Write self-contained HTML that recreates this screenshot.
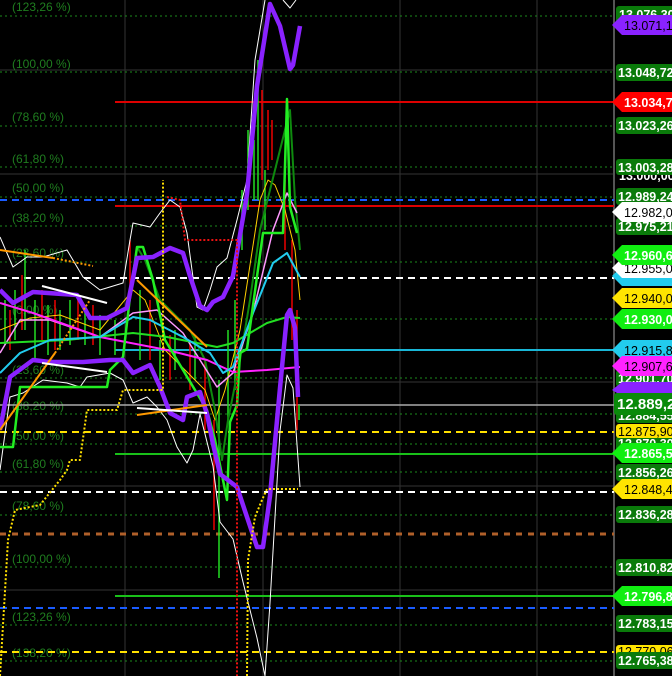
<!DOCTYPE html>
<html><head><meta charset="utf-8"><style>
html,body{margin:0;padding:0;background:#000;width:672px;height:676px;overflow:hidden}
svg{display:block}
text{font-family:"Liberation Sans",sans-serif}
.p{fill:#1f7d1f;font-size:12px}
.g{fill:#fff;font-size:12.5px;font-weight:bold}
.d{fill:#000;font-size:12.5px}
</style></head><body>
<svg width="672" height="676" viewBox="0 0 672 676">
<rect width="672" height="676" fill="#000"/>
<g stroke="#333" stroke-width="1">
<line x1="125" y1="0" x2="125" y2="676"/><line x1="263" y1="0" x2="263" y2="676"/><line x1="400" y1="0" x2="400" y2="676"/><line x1="537" y1="0" x2="537" y2="676"/>
<line x1="0" y1="70" x2="614" y2="70"/><line x1="0" y1="174" x2="614" y2="174"/><line x1="0" y1="382" x2="614" y2="382"/><line x1="0" y1="486" x2="614" y2="486"/><line x1="0" y1="590" x2="614" y2="590"/>
</g>
<line x1="614" y1="0" x2="614" y2="676" stroke="#555" stroke-width="2"/>
<g stroke="#1c8a1c" stroke-width="1" stroke-dasharray="2,3">
<line x1="0" y1="16" x2="614" y2="16"/><line x1="0" y1="72" x2="614" y2="72"/><line x1="0" y1="126" x2="614" y2="126"/><line x1="0" y1="167" x2="614" y2="167"/><line x1="0" y1="197" x2="614" y2="197"/><line x1="0" y1="226" x2="614" y2="226"/><line x1="0" y1="262" x2="614" y2="262"/><line x1="0" y1="319" x2="614" y2="319"/><line x1="0" y1="378" x2="614" y2="378"/><line x1="0" y1="414" x2="614" y2="414"/><line x1="0" y1="444" x2="614" y2="444"/><line x1="0" y1="472" x2="614" y2="472"/><line x1="0" y1="515" x2="614" y2="515"/><line x1="0" y1="567" x2="614" y2="567"/><line x1="0" y1="625" x2="614" y2="625"/><line x1="0" y1="661" x2="614" y2="661"/>
</g>
<g class="p">
<text x="12" y="11">(123,26 %)</text><text x="12" y="68">(100,00 %)</text><text x="12" y="121">(78,60 %)</text><text x="12" y="163">(61,80 %)</text><text x="12" y="192">(50,00 %)</text><text x="12" y="222">(38,20 %)</text><text x="12" y="257">(23,60 %)</text><text x="12" y="314">(0,00 %)</text><text x="12" y="374">(23,60 %)</text><text x="12" y="410">(38,20 %)</text><text x="12" y="440">(50,00 %)</text><text x="12" y="468">(61,80 %)</text><text x="12" y="510">(78,60 %)</text><text x="12" y="563">(100,00 %)</text><text x="12" y="621">(123,26 %)</text><text x="12" y="657">(138,20 %)</text>
</g>
<line x1="115" y1="102" x2="614" y2="102" stroke="#d00" stroke-width="2"/>
<line x1="0" y1="200" x2="614" y2="200" stroke="#1a5cff" stroke-width="2" stroke-dasharray="7,5"/>
<line x1="115" y1="206" x2="614" y2="206" stroke="#d00" stroke-width="2"/>
<line x1="0" y1="278" x2="614" y2="278" stroke="#fff" stroke-width="2" stroke-dasharray="7,5"/>
<line x1="115" y1="350" x2="614" y2="350" stroke="#19b6d6" stroke-width="2"/>
<line x1="0" y1="405" x2="614" y2="405" stroke="#aaa" stroke-width="1.5"/>
<line x1="0" y1="432" x2="614" y2="432" stroke="#ffe000" stroke-width="2" stroke-dasharray="7,5"/>
<line x1="115" y1="454" x2="614" y2="454" stroke="#19c019" stroke-width="2"/>
<line x1="0" y1="492" x2="614" y2="492" stroke="#fff" stroke-width="2" stroke-dasharray="7,5"/>
<line x1="0" y1="534" x2="614" y2="534" stroke="#b0602a" stroke-width="3" stroke-dasharray="6,6"/>
<line x1="115" y1="596" x2="614" y2="596" stroke="#19c019" stroke-width="2"/>
<line x1="0" y1="608" x2="614" y2="608" stroke="#1a5cff" stroke-width="2" stroke-dasharray="7,5"/>
<line x1="0" y1="652" x2="614" y2="652" stroke="#ffe000" stroke-width="2" stroke-dasharray="7,5"/>
<g stroke-width="1.5">
<g stroke="#22dd22"><line x1="5" y1="300" x2="5" y2="345"/><line x1="15" y1="290" x2="15" y2="340"/><line x1="25" y1="250" x2="25" y2="330"/><line x1="35" y1="300" x2="35" y2="360"/><line x1="48" y1="305" x2="48" y2="355"/><line x1="60" y1="310" x2="60" y2="350"/><line x1="70" y1="300" x2="70" y2="345"/><line x1="85" y1="310" x2="85" y2="345"/><line x1="100" y1="315" x2="100" y2="355"/><line x1="115" y1="320" x2="115" y2="355"/><line x1="140" y1="290" x2="140" y2="360"/><line x1="160" y1="340" x2="160" y2="380"/><line x1="175" y1="330" x2="175" y2="370"/><line x1="195" y1="335" x2="195" y2="380"/><line x1="219" y1="380" x2="219" y2="578"/><line x1="228" y1="330" x2="228" y2="420"/><line x1="235" y1="300" x2="235" y2="390"/><line x1="242" y1="190" x2="242" y2="250"/><line x1="248" y1="130" x2="248" y2="210"/><line x1="254" y1="140" x2="254" y2="200"/><line x1="258" y1="60" x2="258" y2="200"/><line x1="265" y1="170" x2="265" y2="230"/><line x1="299" y1="405" x2="299" y2="420"/></g>
<g stroke="#e00"><line x1="10" y1="310" x2="10" y2="350"/><line x1="22" y1="275" x2="22" y2="330"/><line x1="42" y1="290" x2="42" y2="340"/><line x1="55" y1="300" x2="55" y2="350"/><line x1="78" y1="300" x2="78" y2="340"/><line x1="93" y1="305" x2="93" y2="345"/><line x1="130" y1="240" x2="130" y2="300"/><line x1="150" y1="300" x2="150" y2="360"/><line x1="170" y1="335" x2="170" y2="380"/><line x1="190" y1="340" x2="190" y2="390"/><line x1="205" y1="360" x2="205" y2="430"/><line x1="214" y1="420" x2="214" y2="530"/><line x1="262" y1="90" x2="262" y2="180"/><line x1="268" y1="110" x2="268" y2="170"/><line x1="272" y1="120" x2="272" y2="160"/><line x1="285" y1="180" x2="285" y2="250"/><line x1="292" y1="240" x2="292" y2="340"/><line x1="297" y1="310" x2="297" y2="430"/></g>
</g>
<g fill="none" stroke-linejoin="round">
<polyline stroke="#fff" stroke-width="1" points="0,237 13,267 27,257 43,257 67,250 83,277 100,290 123,283 130,240 133,223 150,227 160,213 170,200 180,207 187,233 197,307 203,310 210,290 217,267 227,258 237,220 247,180 255,60 265,0"/>
<polyline stroke="#fff" stroke-width="1" points="283,0 290,8 296,0"/>
<polyline stroke="#fff" stroke-width="1" points="0,470 10,397 23,393 43,380 67,383 80,387 87,377 110,373 123,380 133,403 147,397 157,407 167,420 177,447 187,463 193,450 200,414 213,466 220,522 233,539 243,582 257,638 265,676 270,603 280,431 287,375 293,388 300,487"/>
<polyline stroke="#ffd000" stroke-width="1" points="0,330 30,318 60,315 100,330 133,290 145,300 165,350 185,370 205,390 215,420 225,390 240,330 260,200 268,180 275,185 285,210 295,250 300,300"/>
<polyline stroke="#0e8a0e" stroke-width="2" points="137,247 145,260 160,300 190,330 205,360 215,410 222,460 228,420 240,360 250,300 260,230 290,110 295,200 300,250"/>
<polyline stroke="#ff99ff" stroke-width="1.5" points="0,353 20,320 50,320 100,337 133,313 157,310 183,333 217,387 233,373 253,313 273,230 287,193 297,213"/>
<polyline stroke="#ff22ff" stroke-width="2" points="0,303 33,313 100,337 167,350 207,360 233,372 267,370 300,367"/>
<polyline stroke="#22dd22" stroke-width="2" points="0,343 67,340 133,333 167,337 217,347 233,343 250,333 267,323 287,317 300,318"/>
<polyline stroke="#22ccee" stroke-width="2" points="0,373 20,353 50,340 100,337 133,317 150,320 183,337 210,353 223,373 233,367 253,313 273,263 287,253 300,277"/>
<polyline stroke="#22ee22" stroke-width="2.5" points="0,447 13,447 20,387 107,387 110,370 123,357 130,297 137,247 143,247 153,280 165,340 195,390 207,410 215,440 227,500 230,422 237,405 240,353 247,349 263,233 283,233 287,99 290,207 297,233"/>
<polyline stroke="#8a22ff" stroke-width="4.5" points="0,290 13,303 33,292 77,295 90,318 107,318 127,308 137,258 153,257 170,248 183,253 190,276 200,306 207,310 213,302 223,297 233,276 247,194 257,86 270,4 280,26 290,69 293,65 300,26"/>
<polyline stroke="#8a22ff" stroke-width="4.5" points="0,430 10,377 33,360 50,362 83,362 110,360 123,360 133,373 150,365 160,387 170,413 183,420 187,397 200,392 207,414 213,444 220,474 237,487 247,517 257,547 263,547 270,496 280,388 287,315 290,310 295,328 298,397"/>
<line x1="0" y1="250" x2="53" y2="258" stroke="#ff9900" stroke-width="2"/>
<line x1="53" y1="258" x2="93" y2="266" stroke="#ff9900" stroke-width="2" stroke-dasharray="2,2"/>
<line x1="0" y1="430" x2="55" y2="353" stroke="#ff9900" stroke-width="2"/>
<line x1="55" y1="353" x2="90" y2="300" stroke="#ff9900" stroke-width="2" stroke-dasharray="2,2"/>
<line x1="137" y1="280" x2="207" y2="347" stroke="#ff9900" stroke-width="2"/>
<line x1="137" y1="415" x2="207" y2="405" stroke="#ff9900" stroke-width="2"/>
<line x1="42" y1="286" x2="107" y2="303" stroke="#fff" stroke-width="2"/>
<line x1="42" y1="363" x2="107" y2="372" stroke="#fff" stroke-width="2"/>
<line x1="137" y1="408" x2="207" y2="413" stroke="#fff" stroke-width="2"/>
<polyline stroke="#ffe000" stroke-width="2" stroke-dasharray="2,2" points="0,676 8,540 15,510 40,505 60,480 67,470 70,460 80,460 87,410 117,410 123,390 163,390 163,180"/>
<polyline stroke="#ffe000" stroke-width="2" stroke-dasharray="2,2" points="247,676 248,560 255,517 262,500 267,489 298,489"/>
<polyline stroke="#ee1111" stroke-width="2" stroke-dasharray="2,2" points="167,197 180,200 185,240 237,240 237,676"/>
</g>
<g>
<rect x="616" y="6" width="60" height="17" rx="3" fill="#0a7a0a"/><text class="g" x="619" y="19">13.076,30</text>
<polygon points="612,25 622,15 672,15 672,35 622,35" fill="#8a22ff"/><text class="d" x="624" y="30">13.071,15</text>
<rect x="616" y="64" width="60" height="17" rx="3" fill="#0a7a0a"/><text class="g" x="618" y="77">13.048,72</text>
<polygon points="612,102 622,92 672,92 672,112 622,112" fill="#f00"/><text class="g" x="624" y="107">13.034,76</text>
<rect x="616" y="117" width="60" height="17" rx="3" fill="#0a7a0a"/><text class="g" x="618" y="130">13.023,26</text>
<text class="g" x="619" y="180">13.000,00</text>
<rect x="616" y="159" width="60" height="16" rx="3" fill="#0a7a0a"/><text class="g" x="618" y="172">13.003,28</text>
<rect x="616" y="188" width="60" height="17" rx="3" fill="#0a7a0a"/><text class="g" x="618" y="201">12.989,24</text>
<rect x="616" y="218" width="60" height="17" rx="3" fill="#0a7a0a"/><text class="g" x="618" y="231">12.975,21</text>
<polygon points="612,212 622,202 672,202 672,222 622,222" fill="#fff"/><text class="d" x="624" y="217">12.982,05</text>
<polygon points="612,276 622,266 672,266 672,286 622,286" fill="#22ccee"/>
<polygon points="612,268 622,258 672,258 672,278 622,278" fill="#fff"/><text class="d" x="624" y="273">12.955,00</text>
<polygon points="612,255 622,245 672,245 672,265 622,265" fill="#11ee11"/><text class="g" x="624" y="260">12.960,67</text>
<polygon points="612,298 622,288 672,288 672,308 622,308" fill="#ffe400"/><text class="d" x="624" y="303">12.940,00</text>
<polygon points="612,319 622,309 672,309 672,329 622,329" fill="#11ee11"/><text class="g" x="624" y="324">12.930,00</text>
<polygon points="612,350 622,340 672,340 672,360 622,360" fill="#22ccee"/><text class="d" x="624" y="355">12.915,8</text>
<rect x="616" y="370" width="60" height="17" rx="3" fill="#0a7a0a"/><text class="g" x="618" y="383">12.901,70</text>
<polygon points="612,366 622,356 672,356 672,376 622,376" fill="#ff22ff"/><text class="d" x="624" y="371">12.907,63</text>
<polygon points="612,390 622,382 672,382 672,396 622,396" fill="#8a22ff"/>
<rect x="616" y="408" width="60" height="15" rx="3" fill="#0a7a0a"/><text class="g" x="618" y="420">12.884,55</text>
<rect x="614" y="393" width="62" height="22" rx="3" fill="#0a8a0a"/><text class="g" x="617" y="409" style="font-size:15px">12.889,23</text>
<rect x="616" y="436" width="60" height="15" rx="3" fill="#0a7a0a"/><text class="g" x="618" y="448">12.870,30</text>
<rect x="616" y="424" width="60" height="14" rx="3" fill="#ffe400"/><text class="d" x="618" y="436">12.875,90</text>
<polygon points="612,453 622,443 672,443 672,463 622,463" fill="#11ee11"/><text class="g" x="624" y="458">12.865,54</text>
<rect x="616" y="464" width="60" height="17" rx="3" fill="#0a7a0a"/><text class="g" x="618" y="477">12.856,26</text>
<polygon points="612,489 622,479 672,479 672,499 622,499" fill="#ffe400"/><text class="d" x="624" y="494">12.848,41</text>
<rect x="616" y="506" width="60" height="17" rx="3" fill="#0a7a0a"/><text class="g" x="618" y="519">12.836,28</text>
<rect x="616" y="559" width="60" height="17" rx="3" fill="#0a7a0a"/><text class="g" x="618" y="572">12.810,82</text>
<polygon points="612,596 622,586 672,586 672,606 622,606" fill="#11ee11"/><text class="g" x="624" y="601">12.796,84</text>
<rect x="616" y="615" width="60" height="17" rx="3" fill="#0a7a0a"/><text class="g" x="618" y="628">12.783,15</text>
<rect x="616" y="645" width="60" height="14" rx="3" fill="#ffe400"/><text class="d" x="618" y="656">12.770,06</text>
<rect x="616" y="652" width="60" height="17" rx="3" fill="#0a7a0a"/><text class="g" x="618" y="665">12.765,38</text>
</g>
</svg>
</body></html>
